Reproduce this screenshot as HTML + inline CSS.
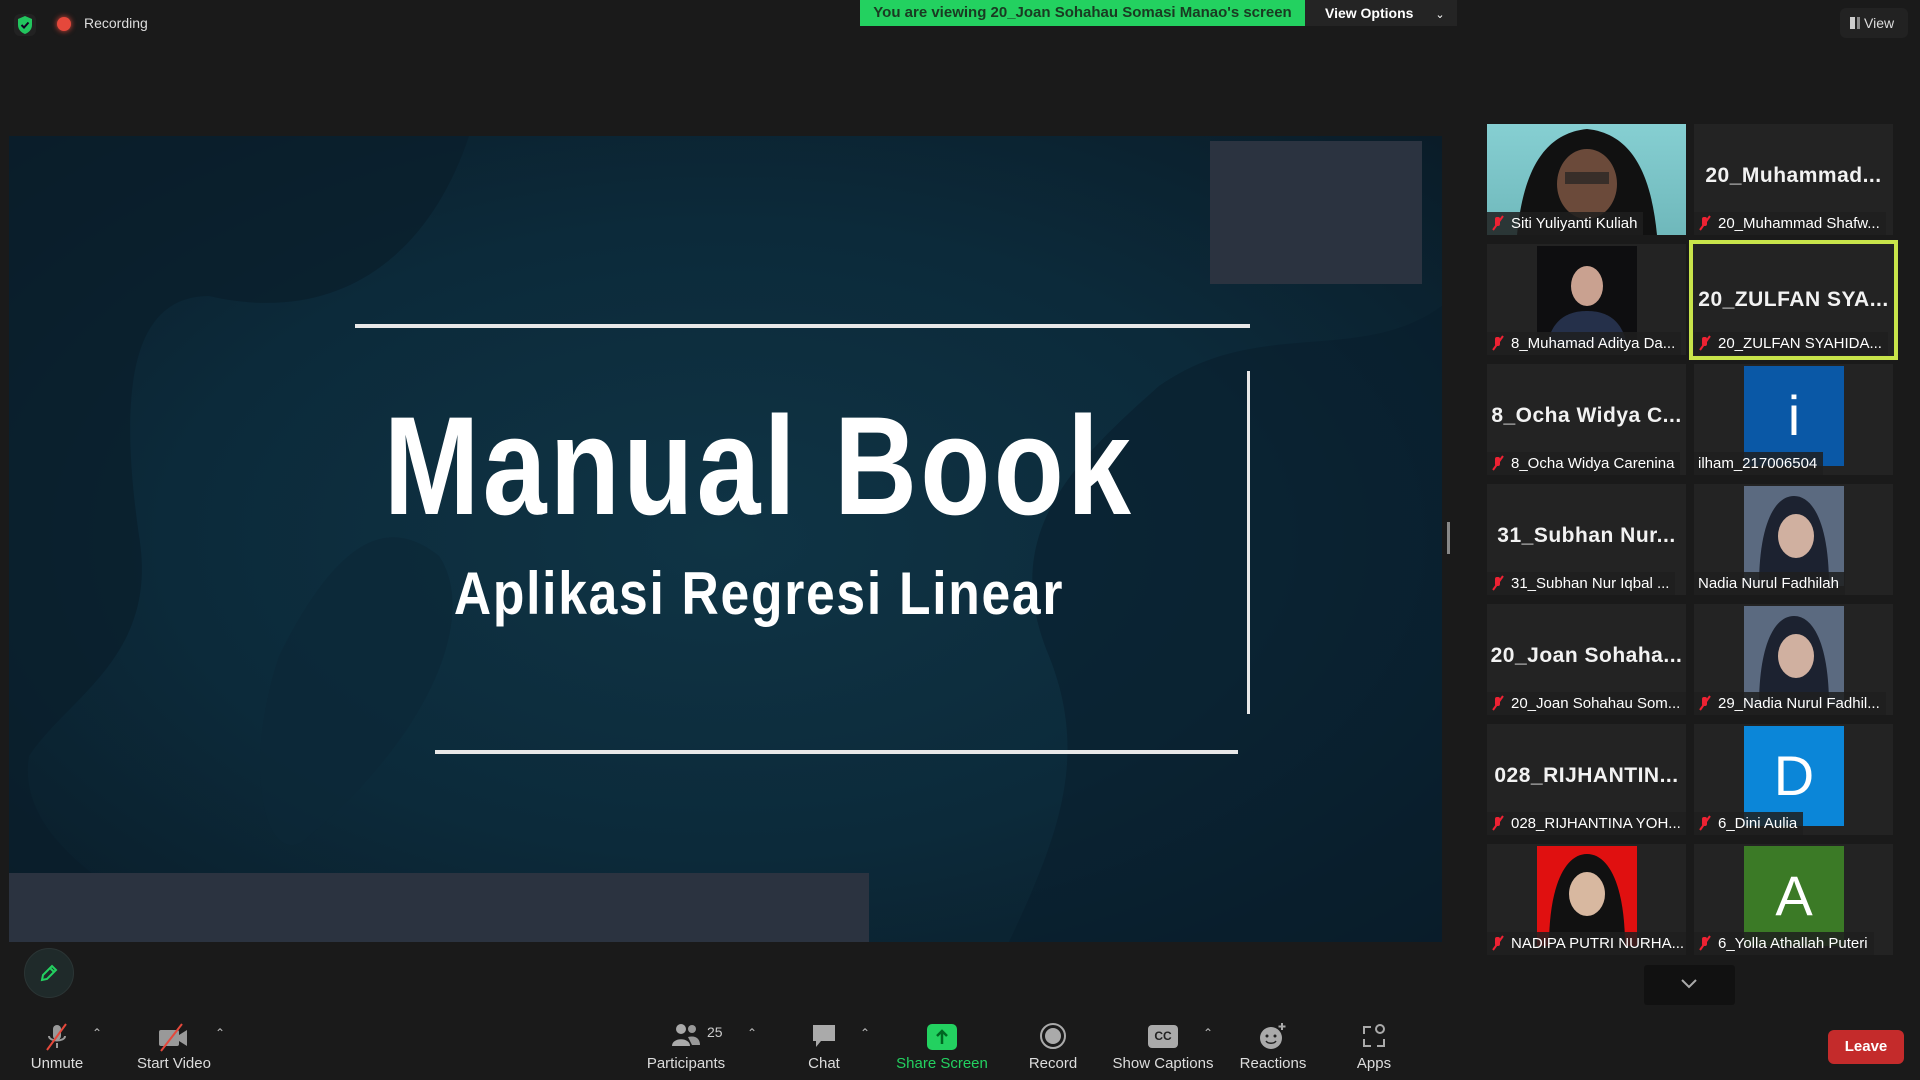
<!DOCTYPE html>
<html><head><meta charset="utf-8"><style>
*{margin:0;padding:0;box-sizing:border-box}
body{width:1920px;height:1080px;background:#1a1a1a;position:relative;overflow:hidden;font-family:"Liberation Sans",sans-serif;color:#fff}
.a{position:absolute}
.tile{position:absolute;width:199px;height:111px;background:#232323;overflow:hidden}
.big{position:absolute;left:0;right:0;top:40px;text-align:center;font-weight:bold;font-size:21px;letter-spacing:0.5px;color:#f2f2f2;white-space:nowrap}
.lab{position:absolute;left:0;bottom:0;height:23px;background:rgba(30,30,30,0.85);font-size:15px;line-height:23px;padding:0 6px 0 4px;white-space:nowrap;color:#fff}
.mic{display:inline-block;width:14px;height:16px;vertical-align:-3px;margin-right:6px}
.av{position:absolute;left:50px;top:2px;width:100px;height:100px;text-align:center;font-size:56px;line-height:100px;color:#fff}
.tb{position:absolute;top:1055px;font-size:15px;color:#ddd;transform:translateX(-50%);white-space:nowrap}
.ic{position:absolute;top:1022px;transform:translateX(-50%)}
.car{position:absolute;top:1026px;color:#bbb;font-size:12px}
</style></head><body>
<!-- top bar -->
<div class="a" style="left:14px;top:14px;width:22px;height:22px;border-radius:6px;background:#222"></div>
<svg class="a" style="left:16px;top:15px" width="18" height="20" viewBox="0 0 18 20"><path d="M9 1 L16 4 V10 C16 15 12 18 9 19 C6 18 2 15 2 10 V4Z" fill="#22c55e"/><path d="M5.5 10 L8 12.5 L12.5 7.5" stroke="#102" stroke-width="2" fill="none"/></svg>
<div class="a" style="left:57px;top:17px;width:14px;height:14px;border-radius:50%;background:#e5483b;box-shadow:0 0 6px #e5483b"></div>
<div class="a" style="left:84px;top:15px;font-size:14px;color:#ddd">Recording</div>
<div class="a" style="left:860px;top:0;width:445px;height:26px;background:#23d160;color:#1a3a22;font-size:15px;font-weight:bold;line-height:26px;text-align:center">You are viewing 20_Joan Sohahau Somasi Manao's screen</div>
<div class="a" style="left:1305px;top:0;width:152px;height:26px;background:#242424;font-size:14px;font-weight:bold;line-height:26px;padding-left:20px">View Options <span style="font-weight:normal;font-size:11px;margin-left:18px">&#8964;</span></div>
<div class="a" style="left:1840px;top:8px;width:68px;height:30px;border-radius:6px;background:#222;font-size:14px;line-height:30px;padding-left:10px;color:#ddd"><span style="display:inline-block;width:10px;height:12px;border-left:5px solid #ccc;border-right:3px solid #888;vertical-align:-1px;margin-right:4px"></span>View</div>

<!-- slide -->
<div class="a" style="left:9px;top:136px;width:1433px;height:806px;background:radial-gradient(ellipse at 50% 50%,#0f3445 0%,#0c2a3a 55%,#0a1c28 100%);overflow:hidden">
<svg class="a" style="left:0;top:0" width="1433" height="806">
<path d="M0 0 H460 C420 120 330 190 200 160 C120 160 110 260 130 400 C150 520 60 560 20 620 C10 680 60 740 200 806 H0Z" fill="#0a1e2b" opacity="0.7"/>
<path d="M1000 806 C1050 700 1080 620 1040 520 C990 400 1060 330 1150 250 C1250 180 1350 230 1433 170 V806Z" fill="#0a1e2b" opacity="0.55"/>
<path d="M270 520 C330 400 380 380 430 420 C470 480 420 600 300 700 C260 740 230 640 270 520Z" fill="#0d2838" opacity="0.7"/>
<rect x="1201" y="5" width="212" height="143" fill="#2b3340"/>
<rect x="0" y="737" width="860" height="69" fill="#2b3340"/>
<rect x="346" y="188" width="895" height="4" fill="#e8e8e8"/>
<rect x="1238" y="235" width="3" height="343" fill="#e8e8e8"/>
<rect x="426" y="614" width="803" height="4" fill="#e8e8e8"/>
</svg>
<div class="a" style="left:0;width:1500px;top:250px;text-align:center;font-weight:bold;font-size:140px;line-height:160px;letter-spacing:4px;transform:scaleX(0.82)">Manual Book</div>
<div class="a" style="left:0;width:1500px;top:418px;text-align:center;font-weight:bold;font-size:60px;line-height:80px;letter-spacing:2px;transform:scaleX(0.86)">Aplikasi Regresi Linear</div>
</div>
<div class="a" style="left:1447px;top:522px;width:3px;height:32px;background:#888"></div>
<div class="a" style="left:24px;top:948px;width:50px;height:50px;border-radius:50%;background:#1f2a2a;border:1px solid #2b3535"></div>
<svg class="a" style="left:38px;top:962px" width="22" height="22" viewBox="0 0 22 22"><path d="M4 18 L5 13 L14 4 L18 8 L9 17Z M12 6 L16 10" stroke="#23d160" stroke-width="2" fill="none"/></svg>

<!-- tiles -->
<div class="tile" style="left:1487px;top:124px;background:linear-gradient(180deg,#86cfd2,#6fb8bb)">
<svg class="a" width="199" height="111"><path d="M30 111 C35 60 50 10 100 5 C150 10 165 60 170 111Z" fill="#111"/><ellipse cx="100" cy="60" rx="30" ry="35" fill="#6b4a3a"/><rect x="78" y="48" width="44" height="12" fill="#222" opacity=".7"/></svg>
<div class="lab"><svg class="mic" viewBox="0 0 14 16"><path d="M2 15 L12 1" stroke="#e23" stroke-width="2"/><rect x="4" y="2" width="5" height="9" rx="2" fill="#e23"/></svg>Siti Yuliyanti Kuliah</div></div>
<div class="tile" style="left:1694px;top:124px"><div class="big">20_Muhammad...</div><div class="lab"><svg class="mic" viewBox="0 0 14 16"><path d="M2 15 L12 1" stroke="#e23" stroke-width="2"/><rect x="4" y="2" width="5" height="9" rx="2" fill="#e23"/></svg>20_Muhammad Shafw...</div></div>

<div class="tile" style="left:1487px;top:244px"><div class="av" style="background:#0e0e10"><svg width="100" height="100"><ellipse cx="50" cy="40" rx="16" ry="20" fill="#c9a190"/><path d="M10 100 C15 70 35 65 50 65 C65 65 85 70 90 100Z" fill="#25304a"/></svg></div>
<div class="lab"><svg class="mic" viewBox="0 0 14 16"><path d="M2 15 L12 1" stroke="#e23" stroke-width="2"/><rect x="4" y="2" width="5" height="9" rx="2" fill="#e23"/></svg>8_Muhamad Aditya Da...</div></div>
<div class="tile" style="left:1689px;top:240px;width:209px;height:120px;border:4px solid #c8e44a;padding:0"><div class="big" style="top:44px">20_ZULFAN SYA...</div><div class="lab" style="left:1px;bottom:1px"><svg class="mic" viewBox="0 0 14 16"><path d="M2 15 L12 1" stroke="#e23" stroke-width="2"/><rect x="4" y="2" width="5" height="9" rx="2" fill="#e23"/></svg>20_ZULFAN SYAHIDA...</div></div>

<div class="tile" style="left:1487px;top:364px"><div class="big">8_Ocha Widya C...</div><div class="lab"><svg class="mic" viewBox="0 0 14 16"><path d="M2 15 L12 1" stroke="#e23" stroke-width="2"/><rect x="4" y="2" width="5" height="9" rx="2" fill="#e23"/></svg>8_Ocha Widya Carenina</div></div>
<div class="tile" style="left:1694px;top:364px"><div class="av" style="background:#0a58a6">i</div><div class="lab">ilham_217006504</div></div>

<div class="tile" style="left:1487px;top:484px"><div class="big">31_Subhan Nur...</div><div class="lab"><svg class="mic" viewBox="0 0 14 16"><path d="M2 15 L12 1" stroke="#e23" stroke-width="2"/><rect x="4" y="2" width="5" height="9" rx="2" fill="#e23"/></svg>31_Subhan Nur Iqbal ...</div></div>
<div class="tile" style="left:1694px;top:484px"><div class="av" style="background:#5b6a80"><svg width="100" height="100"><path d="M15 100 C15 40 30 10 50 10 C70 10 85 40 85 100Z" fill="#1c2230"/><ellipse cx="52" cy="50" rx="18" ry="22" fill="#d0b0a0"/></svg></div><div class="lab">Nadia Nurul Fadhilah</div></div>

<div class="tile" style="left:1487px;top:604px"><div class="big">20_Joan Sohaha...</div><div class="lab"><svg class="mic" viewBox="0 0 14 16"><path d="M2 15 L12 1" stroke="#e23" stroke-width="2"/><rect x="4" y="2" width="5" height="9" rx="2" fill="#e23"/></svg>20_Joan Sohahau Som...</div></div>
<div class="tile" style="left:1694px;top:604px"><div class="av" style="background:#5b6a80"><svg width="100" height="100"><path d="M15 100 C15 40 30 10 50 10 C70 10 85 40 85 100Z" fill="#1c2230"/><ellipse cx="52" cy="50" rx="18" ry="22" fill="#d0b0a0"/></svg></div><div class="lab"><svg class="mic" viewBox="0 0 14 16"><path d="M2 15 L12 1" stroke="#e23" stroke-width="2"/><rect x="4" y="2" width="5" height="9" rx="2" fill="#e23"/></svg>29_Nadia Nurul Fadhil...</div></div>

<div class="tile" style="left:1487px;top:724px"><div class="big">028_RIJHANTIN...</div><div class="lab"><svg class="mic" viewBox="0 0 14 16"><path d="M2 15 L12 1" stroke="#e23" stroke-width="2"/><rect x="4" y="2" width="5" height="9" rx="2" fill="#e23"/></svg>028_RIJHANTINA YOH...</div></div>
<div class="tile" style="left:1694px;top:724px"><div class="av" style="background:#0b86d8">D</div><div class="lab"><svg class="mic" viewBox="0 0 14 16"><path d="M2 15 L12 1" stroke="#e23" stroke-width="2"/><rect x="4" y="2" width="5" height="9" rx="2" fill="#e23"/></svg>6_Dini Aulia</div></div>

<div class="tile" style="left:1487px;top:844px"><div class="av" style="background:#e01010"><svg width="100" height="100"><path d="M12 100 C12 40 28 8 50 8 C72 8 88 40 88 100Z" fill="#111"/><ellipse cx="50" cy="48" rx="18" ry="22" fill="#d8b8a0"/></svg></div><div class="lab"><svg class="mic" viewBox="0 0 14 16"><path d="M2 15 L12 1" stroke="#e23" stroke-width="2"/><rect x="4" y="2" width="5" height="9" rx="2" fill="#e23"/></svg>NADIPA PUTRI NURHA...</div></div>
<div class="tile" style="left:1694px;top:844px"><div class="av" style="background:#3b7a26">A</div><div class="lab"><svg class="mic" viewBox="0 0 14 16"><path d="M2 15 L12 1" stroke="#e23" stroke-width="2"/><rect x="4" y="2" width="5" height="9" rx="2" fill="#e23"/></svg>6_Yolla Athallah Puteri</div></div>

<div class="a" style="left:1644px;top:965px;width:91px;height:40px;background:#111;border-radius:3px"></div>
<svg class="a" style="left:1680px;top:978px" width="18" height="12"><path d="M2 2 L9 9 L16 2" stroke="#aaa" stroke-width="2" fill="none"/></svg>

<!-- toolbar -->
<svg class="ic" style="left:57px" width="30" height="30" viewBox="0 0 30 30"><rect x="11" y="3" width="8" height="15" rx="4" fill="#999"/><path d="M7 14 C7 20 23 20 23 14 M15 21 V26" stroke="#999" stroke-width="2" fill="none"/><path d="M5 28 L24 2" stroke="#e5483b" stroke-width="2"/></svg>
<div class="car" style="left:92px">&#8963;</div>
<svg class="ic" style="left:173px" width="34" height="30" viewBox="0 0 34 30"><rect x="3" y="8" width="20" height="16" rx="2" fill="#999"/><path d="M23 13 L31 8 V24 L23 19Z" fill="#999"/><path d="M5 29 L26 2" stroke="#e5483b" stroke-width="2"/></svg>
<div class="car" style="left:215px">&#8963;</div>
<div class="tb" style="left:57px">Unmute</div>
<div class="tb" style="left:174px">Start Video</div>

<svg class="ic" style="left:686px" width="30" height="26" viewBox="0 0 30 26"><circle cx="10" cy="7" r="5" fill="#aaa"/><path d="M1 24 C1 15 19 15 19 24Z" fill="#aaa"/><circle cx="21" cy="7" r="4" fill="#999"/><path d="M17 15 C25 13 29 17 29 23 H21Z" fill="#999"/></svg>
<div class="a" style="left:707px;top:1024px;font-size:14px;color:#ccc">25</div>
<div class="car" style="left:747px">&#8963;</div>
<div class="tb" style="left:686px">Participants</div>
<svg class="ic" style="left:824px" width="28" height="28" viewBox="0 0 28 28"><path d="M3 3 H25 V19 H11 L6 25 V19 H3Z" fill="#aaa"/></svg>
<div class="car" style="left:860px">&#8963;</div>
<div class="tb" style="left:824px">Chat</div>
<div class="ic" style="left:942px;width:30px;height:26px;background:#23d160;border-radius:5px;top:1024px"><svg width="30" height="26"><path d="M15 20 V7 M10 12 L15 7 L20 12" stroke="#062" stroke-width="2.5" fill="none"/></svg></div>
<div class="tb" style="left:942px;color:#23d160">Share Screen</div>
<svg class="ic" style="left:1053px" width="28" height="28"><circle cx="14" cy="14" r="12" stroke="#aaa" stroke-width="2" fill="none"/><circle cx="14" cy="14" r="8" fill="#aaa"/></svg>
<div class="tb" style="left:1053px">Record</div>
<div class="ic" style="left:1163px;top:1025px;width:30px;height:23px;background:#aaa;border-radius:4px;color:#222;font-size:12px;font-weight:bold;text-align:center;line-height:23px">CC</div>
<div class="car" style="left:1203px">&#8963;</div>
<div class="tb" style="left:1163px">Show Captions</div>
<svg class="ic" style="left:1273px" width="30" height="30"><circle cx="13" cy="16" r="11" fill="#aaa"/><circle cx="9" cy="14" r="1.5" fill="#222"/><circle cx="17" cy="14" r="1.5" fill="#222"/><path d="M8 19 C10 22 16 22 18 19" stroke="#222" stroke-width="1.5" fill="none"/><path d="M24 1 V8 M20.5 4.5 H27.5" stroke="#aaa" stroke-width="2"/></svg>
<div class="tb" style="left:1273px">Reactions</div>
<svg class="ic" style="left:1374px" width="26" height="28"><path d="M3 12 V5 H10 M3 17 V24 H10 M16 24 H23 V17" stroke="#aaa" stroke-width="2" fill="none"/><circle cx="19" cy="7" r="4" stroke="#aaa" stroke-width="2" fill="none"/></svg>
<div class="tb" style="left:1374px">Apps</div>

<div class="a" style="left:1828px;top:1030px;width:76px;height:34px;background:#c42b2b;border-radius:6px;font-size:15px;font-weight:bold;line-height:34px;text-align:center">Leave</div>
</body></html>
